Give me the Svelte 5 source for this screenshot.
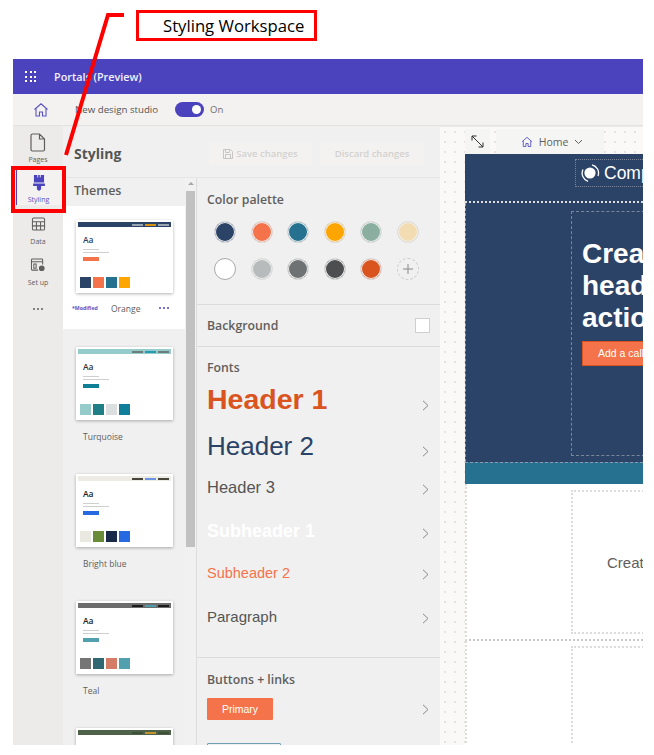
<script>
  const themes = [
    { name: 'Orange', bar: '#2c4368', links: ['#9aa3b0', '#d8920f', '#9aa3b0'], aa: '#2c4368', btn: '#f4734a', swatches: ['#2c4368', '#f4734a', '#25718f', '#ffa500'], selected: true },
    { name: 'Turquoise', bar: '#94cbcb', links: ['#6f7c7c', '#2a9ab0', '#6f7c7c'], aa: '#333', btn: '#0f7f95', swatches: ['#94cbcb', '#1f7f86', '#dcdfdf', '#0f7f9a'] },
    { name: 'Bright blue', bar: '#ecebe4', links: ['#45453a', '#6b94e4', '#45453a'], aa: '#222', btn: '#2669e0', swatches: ['#e9e9e2', '#6a8c39', '#1a2b4a', '#2669e0'] },
    { name: 'Teal', bar: '#6d6d6d', links: ['#1c1c1c', '#4f9aa8', '#1c1c1c'], aa: '#222', btn: '#52a0ae', swatches: ['#757575', '#2f6873', '#d47c66', '#52a0ae'] },
    { name: 'Moss', bar: '#4d6249', links: ['#3f5039', '#c2962a', '#3f5039'], aa: '#222', btn: '#4d6249', swatches: [] }
  ];
  const palette = ['#2c4368', '#f4734a', '#25718f', '#ffa500', '#8aaea0', '#f3dcb2', '#ffffff', '#b7bbbb', '#6e7272', '#4c4e50', '#da5420'];
  const fonts = [
    { label: 'Header 1', cls: 'f1' },
    { label: 'Header 2', cls: 'f2' },
    { label: 'Header 3', cls: 'f3' },
    { label: 'Subheader 1', cls: 'f4' },
    { label: 'Subheader 2', cls: 'f5' },
    { label: 'Paragraph', cls: 'f6' }
  ];
  const dots = Array.from({ length: 9 });
</script>

<div class="frame">
  <header class="topbar">
    <span class="waffle">{#each dots as _}<i></i>{/each}</span>
    <span class="product">Portals (Preview)</span>
  </header>
  <div class="subbar">
    <svg class="home" width="16" height="16" viewBox="0 0 16 16" fill="none" stroke="#5a52c4" stroke-width="1.1"><path d="M1.5 7.500 8 1.800l6.500 5.700M3 6.500V14h3.500v-4h3v4H13V6.500"/></svg>
    <span class="studio">New design studio</span>
    <span class="toggle"><i></i></span>
    <span class="on">On</span>
  </div>
  <div class="body">
    <nav class="rail">
      <div class="rail-item pages">
        <svg width="16" height="19" viewBox="0 0 16 19" fill="none" stroke="#605e5c" stroke-width="1.2"><path d="M2.500 1h7l5 5v10.500a1.500 1.500 0 0 1-1.500 1.500h-10.500A1.500 1.500 0 0 1 1 16.500V2.500A1.500 1.500 0 0 1 2.500 1ZM9.500 1v5h5"/></svg>
        <span>Pages</span>
      </div>
      <div class="rail-item active">
        <svg width="12" height="16" viewBox="0 0 14 19" fill="#4b43bd"><path d="M1 0h4v3h1V0h2v3h1V0h4v9H1zM0 10h14v3H9.500v4L7 19l-2.500-2v-4H0z"/></svg>
        <span>Styling</span>
      </div>
      <div class="rail-item">
        <svg width="15" height="14" viewBox="0 0 15 15" fill="none" stroke="#605e5c" stroke-width="1.1"><rect x="1" y="1" width="13" height="13" rx="1.500"/><path d="M1 5h13M1 9.500h13M5.300 5v9M9.700 5v9"/></svg>
        <span>Data</span>
      </div>
      <div class="rail-item">
        <svg width="16" height="14" viewBox="0 0 16 15" fill="none" stroke="#605e5c" stroke-width="1.1"><path d="M8 13H2a1 1 0 0 1-1-1V2a1 1 0 0 1 1-1h10a1 1 0 0 1 1 1v5M1 4h12M3.500 6.500h2.500V11H3.500z"/><circle cx="12" cy="11" r="2.500" fill="#605e5c"/></svg>
        <span>Set up</span>
      </div>
      <div class="rail-more"><i></i><i></i><i></i></div>
    </nav>

    <div class="workspace">
      <div class="head">
        <h1>Styling</h1>
        <button class="ghost save">
          <svg width="10" height="10" viewBox="0 0 10 10" fill="none" stroke="#c8c6c4"><path d="M.5.500h7l2 2v7h-9zM2.500.500v3h4v-3M2.500 9.500v-4h5v4"/></svg>
          Save changes
        </button>
        <button class="ghost discard">Discard changes</button>
      </div>
      <div class="columns">
        <section class="themes">
          <h2>Themes</h2>
          <div class="theme-list">
            {#each themes as t}
              <article class="theme" class:selected={t.selected}>
                <div class="card">
                  <div class="card-bar" style="background:{t.bar}">
                    {#each t.links as c}<i style="background:{c}"></i>{/each}
                  </div>
                  <div class="card-aa" style="color:{t.aa}">Aa</div>
                  <i class="ln short"></i>
                  <i class="ln"></i>
                  <i class="card-btn" style="background:{t.btn}"></i>
                  <div class="card-sw">
                    {#each t.swatches as c}<i style="background:{c}"></i>{/each}
                  </div>
                </div>
                {#if t.selected}
                  <div class="theme-foot">
                    <span class="mod">*Modified</span>
                    <span class="tname">{t.name}</span>
                    <span class="dots3"><i></i><i></i><i></i></span>
                  </div>
                {:else}
                  <div class="theme-foot plain"><span class="tname">{t.name}</span></div>
                {/if}
              </article>
            {/each}
          </div>
          <div class="scroll">
            <span class="arrow"></span>
            <span class="thumb"></span>
          </div>
        </section>

        <section class="panel">
          <div class="block palette">
            <h3>Color palette</h3>
            <div class="swatches">
              {#each palette as c}
                <span class="swatch" class:white={c === '#ffffff'} style="background:{c}"></span>
              {/each}
              <span class="swatch add">
                <svg width="12" height="12" viewBox="0 0 12 12" stroke="#8a8886" stroke-width="1"><path d="M6 1v10M1 6h10"/></svg>
              </span>
            </div>
          </div>
          <div class="block bg">
            <h3>Background</h3>
            <span class="bgbox"></span>
          </div>
          <div class="block fontsb">
            <h3>Fonts</h3>
            {#each fonts as f}
              <div class="font-row {f.cls}">
                <span>{f.label}</span>
                <svg class="chev" width="7" height="11" viewBox="0 0 7 11" fill="none" stroke="#8a8886"><path d="m1 .800 5 4.700-5 4.700"/></svg>
              </div>
            {/each}
          </div>
          <div class="block buttons">
            <h3>Buttons + links</h3>
            <div class="btn-row">
              <span class="primary">Primary</span>
              <svg class="chev" width="7" height="11" viewBox="0 0 7 11" fill="none" stroke="#8a8886"><path d="m1 .800 5 4.700-5 4.700"/></svg>
            </div>
            <div class="secondary"></div>
          </div>
        </section>
      </div>
    </div>

    <main class="canvas">
      <div class="toolbar">
        <span class="tool expand">
          <svg width="13" height="13" viewBox="0 0 13 13" fill="none" stroke="#323130"><path d="M1 1l11 11M1 5.500V1h4.500M12 7.500V12H7.500"/></svg>
        </span>
        <span class="tool pagepick">
          <svg width="12" height="12" viewBox="0 0 16 16" fill="none" stroke="#5a52c4" stroke-width="1.200"><path d="M1.500 7.500 8 1.800l6.500 5.700M3 6.500V14h3.500v-4h3v4H13V6.500"/></svg>
          Home
          <svg width="9" height="6" viewBox="0 0 9 6" fill="none" stroke="#605e5c"><path d="m1 1 3.500 3.500L8 1"/></svg>
        </span>
      </div>
      <div class="page">
        <div class="site-head">
          <div class="logo">
            <svg width="20" height="20" viewBox="0 0 20 20"><circle cx="10" cy="10" r="5.600" fill="#fff"/><path d="M3 6.500A8.500 8.500 0 0 0 8 18.300M12 1.800A8.500 8.500 0 0 1 18 13" fill="none" stroke="#fff" stroke-width="1.300"/></svg>
            <span>Company name</span>
          </div>
        </div>
        <div class="hero">
          <div class="hero-box">
            <div class="hero-title">Create a<br />header or<br />action</div>
            <span class="cta">Add a call to action</span>
          </div>
        </div>
        <div class="band"></div>
        <div class="sect one">
          <div class="sect-box"><span>Create content</span></div>
        </div>
        <div class="sect two">
          <div class="sect-box"></div>
        </div>
      </div>
    </main>
  </div>
</div>

<svg class="pointer" width="70" height="150" viewBox="0 0 70 150" fill="none" stroke="#ff0000" stroke-width="4"><path d="M2 142 44 2h16"/></svg>
<div class="callout">Styling Workspace</div>
<div class="rail-callout"></div>

<style>
  :global(body) { margin: 0; background: #fff; }
  * { box-sizing: border-box; }
  .frame {
    width: 630px; height: 686px; margin: 59px 0 0 13px;
    display: flex; flex-direction: column; overflow: hidden;
    font-family: "Open Sans", "Noto Sans", sans-serif; color: #605e5c;
    position: relative;
  }
  .topbar { height: 35px; background: #4b43bd; display: flex; align-items: center; padding-left: 12px; flex: none; }
  .waffle { width: 11px; display: grid; grid-template-columns: repeat(3, 2px); gap: 2.500px; }
  .waffle i { width: 2px; height: 2px; background: #fff; }
  .product { margin-left: 18px; color: #f3f2fb; font-size: 10.800px; font-weight: 600; }
  .subbar { height: 32px; background: #f3f2f1; display: flex; align-items: center; flex: none; border-bottom: 1px solid #e3e2e0; }
  .home { margin-left: 20px; }
  .studio { margin-left: 26px; font-size: 9.700px; color: #555; font-weight: 500; width: 100px; }
  .toggle { width: 29px; height: 15px; border-radius: 8px; background: #4b43bd; position: relative; }
  .toggle i { position: absolute; right: 3px; top: 3px; width: 9px; height: 9px; border-radius: 50%; background: #fff; }
  .on { margin-left: 6px; font-size: 9.500px; color: #706e6c; }

  .body { flex: 1; display: flex; min-height: 0; }
  .rail { width: 50px; flex: none; background: #ecebea; padding-top: 7px; display: flex; flex-direction: column; align-items: stretch; }
  .rail-item { height: 41px; display: flex; flex-direction: column; align-items: center; font-size: 7px; line-height: 10px; gap: 6px; color: #605e5c; }
  .rail-item svg { flex: none; }
  .rail-item.pages { height: 35px; gap: 3px; }
  .rail-item.active { background: #f3f2f1; color: #5a52c4; border-left: 1px solid #4b43bd; margin: 0 0 12px 3px; padding: 7px 3px 0 0; height: 37px; gap: 4px; }
  .rail-more { display: flex; justify-content: center; gap: 2px; margin-top: 9px; }
  .rail-more i { width: 2px; height: 2px; border-radius: 50%; background: #605e5c; }

  .workspace { width: 377px; flex: none; display: flex; flex-direction: column; background: #f0f0f0; min-height: 0; }
  .head { height: 52px; flex: none; display: flex; align-items: center; padding: 4px 0 0 11px; border-bottom: 1px solid #e6e5e4; }
  h1 { margin: 0; font-size: 14px; font-weight: 700; color: #555; width: 135px; }
  .ghost { height: 23px; border: 0; background: #f3f2f1; font: 600 9.500px "Open Sans", sans-serif; color: #d3d1cf; display: flex; align-items: center; justify-content: center; gap: 3px; padding: 0; }
  .save { width: 103px; margin-right: 8px; }
  .discard { width: 104px; }

  .columns { flex: 1; display: flex; min-height: 0; }
  .themes { width: 134px; flex: none; position: relative; overflow: hidden; border-right: 1px solid #dedddc; }
  h2 { margin: 0; height: 28px; font-size: 12.500px; font-weight: 600; color: #605e5c; padding: 4px 0 0 11px; }
  .theme-list { width: 122px; }
  .theme { height: 127px; padding: 14px 0 0 13px; }
  .theme.selected { background: #fff; height: 123px; margin-bottom: 4px; }
  .card { width: 97px; height: 73px; background: #fff; box-shadow: 0 1px 3px rgba(0,0,0,.3); position: relative; padding: 2px; display: flex; flex-direction: column; }
  .card-bar { height: 5px; display: flex; justify-content: flex-end; align-items: center; gap: 2px; padding-right: 2px; flex: none; }
  .card-bar i { width: 11px; height: 2px; }
  .card-aa { font: 600 8.500px "Open Sans", sans-serif; margin: 7px 0 0 5px; height: 11px; line-height: 11px; }
  .ln { display: block; width: 26px; height: 1px; background: #cfcfcf; margin: 2px 0 0 5px; }
  .ln.short { width: 16px; margin-top: 4px; }
  .card-btn { display: block; width: 16px; height: 4px; margin: 4px 0 0 5px; }
  .card-sw { position: absolute; left: 4px; bottom: 5px; display: flex; gap: 2px; }
  .card-sw i { width: 11px; height: 11px; box-shadow: 0 0 0 1px rgba(255,255,255,.6); }
  .theme-foot { display: flex; align-items: center; height: 24px; font-size: 8.500px; margin-top: 3px; }
  .tname { color: #605e5c; }
  .theme-foot.plain { padding-left: 7px; margin-top: 4px; }
  .mod { color: #5a52c4; font-size: 5.200px; font-weight: 700; margin-left: -4px; width: 39px; }
  .dots3 { display: flex; gap: 2px; margin-left: 19px; }
  .dots3 i { width: 2px; height: 2px; border-radius: 50%; background: #4b43bd; }
  .scroll { position: absolute; left: 122px; top: 0; bottom: 0; width: 11px; background: #f1f1f1; }
  .arrow { position: absolute; left: 3px; top: 4px; border: 3px solid transparent; border-top: 0; border-bottom: 3px solid #a8a8a8; }
  .thumb { position: absolute; left: 1px; top: 13px; width: 9px; height: 356px; background: #c1c1c1; }

  .panel { flex: 1; min-width: 0; overflow: hidden; }
  .block { border-bottom: 1px solid #dcdbda; padding: 0 10px; }
  h3 { margin: 0; font-size: 12.300px; font-weight: 600; color: #605e5c; }
  .palette { height: 127px; padding-top: 13px; }
  .swatches { display: grid; grid-template-columns: repeat(6, 22px); column-gap: 14.600px; row-gap: 14.500px; margin: 13px 0 0 7px; }
  .swatch { width: 22px; height: 22px; border-radius: 50%; border: 1px solid #dedede; background-clip: padding-box; box-shadow: inset 0 0 0 1px #f0f0f0; }
  .swatch.white { border: 1px solid #a9a9a9; box-shadow: none; }
  .swatch.add { border: 1px dashed #cfcfcf; background: none; box-shadow: none; display: flex; align-items: center; justify-content: center; }
  .bg { height: 42px; display: flex; align-items: center; justify-content: space-between; padding-right: 10px; }
  .bgbox { width: 15px; height: 15px; background: #fff; border: 1px solid #cfcfcf; }
  .fontsb { height: 311px; padding-top: 12px; }
  .font-row { display: flex; justify-content: space-between; font-family: "Liberation Sans", Arial, sans-serif; color: #555; padding-right: 1px; align-items: center; }
  .chev { flex: none; position: relative; top: 2px; }
  .f1 { height: 47px; font-size: 28.500px; font-weight: 700; color: #d9541e; }
  .f1 .chev { top: 6px; }
  .f2 { height: 47px; font-size: 26px; color: #2c4368; }
  .f2 .chev { top: 5px; }
  .f3 { height: 37px; font-size: 16.500px; margin-top: -1px; }
  .f4 { height: 50px; font-size: 18px; font-weight: 700; color: #fff; }
  .f5 { height: 35px; font-size: 14.500px; color: #f4734a; margin-top: -1px; }
  .f6 { height: 52px; font-size: 15px; }
  .buttons { border: 0; padding-top: 13px; }
  .btn-row { display: flex; justify-content: space-between; align-items: center; margin-top: 10px; padding-right: 1px; }
  .btn-row .chev { top: 0; }
  .primary { width: 66px; height: 22px; background: #f4734a; color: #fff; border-radius: 1px; font: 10.500px/22px "Liberation Sans", Arial, sans-serif; text-align: center; }
  .secondary { width: 74px; height: 20px; border: 1px solid #6f9fb5; margin-top: 23px; border-radius: 1px; }

  .canvas {
    flex: 1; min-width: 0; overflow: hidden; padding: 2px 0 0 25px;
    background-color: #faf9f8;
    background-image: radial-gradient(#e4e2e0 .7px, transparent .8px);
    background-size: 10px 10px;
    border-top: 1px solid #ecebea;
    font-family: "Liberation Sans", Arial, sans-serif;
  }
  .toolbar { height: 25px; display: flex; gap: 6px; }
  .tool { height: 25px; background: #f5f5f4; display: flex; align-items: center; flex: none; font: 10.500px "Open Sans", sans-serif; color: #605e5c; }
  .expand { width: 25px; padding-left: 6px; }
  .pagepick { width: 108px; gap: 6px; justify-content: center; padding-left: 4px; }
  .page { width: 178px; background: #fff; overflow: hidden; }
  .page > * { width: 178px; }
  .site-head { height: 49px; background: #2c4368; padding: 5px 0 0 110px; border-bottom: 2px dotted #ddd; }
  .logo { width: 120px; height: 28px; border: 1px dotted #7b8799; display: flex; align-items: center; gap: 4px; padding-left: 4px; color: #fff; font-size: 17.500px; white-space: nowrap; }
  .logo svg { flex: none; }
  .hero { height: 259px; background: #2c4368; padding: 8px 0 0 105px; border-left: 1px dashed #8e9aac; }
  .hero-box { width: 200px; height: 245px; border: 1px dashed #7b8799; padding: 26px 0 0 10px; }
  .hero-title { color: #fff; font-size: 28px; font-weight: 700; line-height: 32px; white-space: nowrap; }
  .cta { display: block; width: 130px; height: 25px; margin-top: 7px; background: #f4734a; border: 1px solid #d9541e; color: #fff; font-size: 10.500px; line-height: 23px; padding-left: 15px; white-space: nowrap; }
  .band { height: 22px; background: #25718f; border-top: 1px dashed #8e9aac; }
  .sect { border-left: 2px dotted #dcdcdc; padding-left: 104px; }
  .sect.one { height: 157px; padding-top: 6px; border-bottom: 2px dotted #c8c8c8; }
  .sect.two { height: 110px; padding-top: 5px; }
  .sect-box { width: 200px; height: 144px; border: 2px dotted #dcdcdc; display: flex; align-items: center; padding-left: 34px; color: #605e5c; font-size: 15px; white-space: nowrap; }
  .two .sect-box { height: 120px; border-bottom: 0; }

  .pointer { position: absolute; left: 64px; top: 13px; }
  .callout {
    position: absolute; left: 136px; top: 10px; width: 181px; height: 31px;
    border: 3px solid #ff0000; background: #fff; color: #000;
    font: 16.700px/25px "Open Sans", sans-serif; padding-left: 24px; white-space: nowrap;
  }
  .rail-callout { position: absolute; left: 11px; top: 166px; width: 55px; height: 47px; border: 4px solid #ff0000; }
</style>
